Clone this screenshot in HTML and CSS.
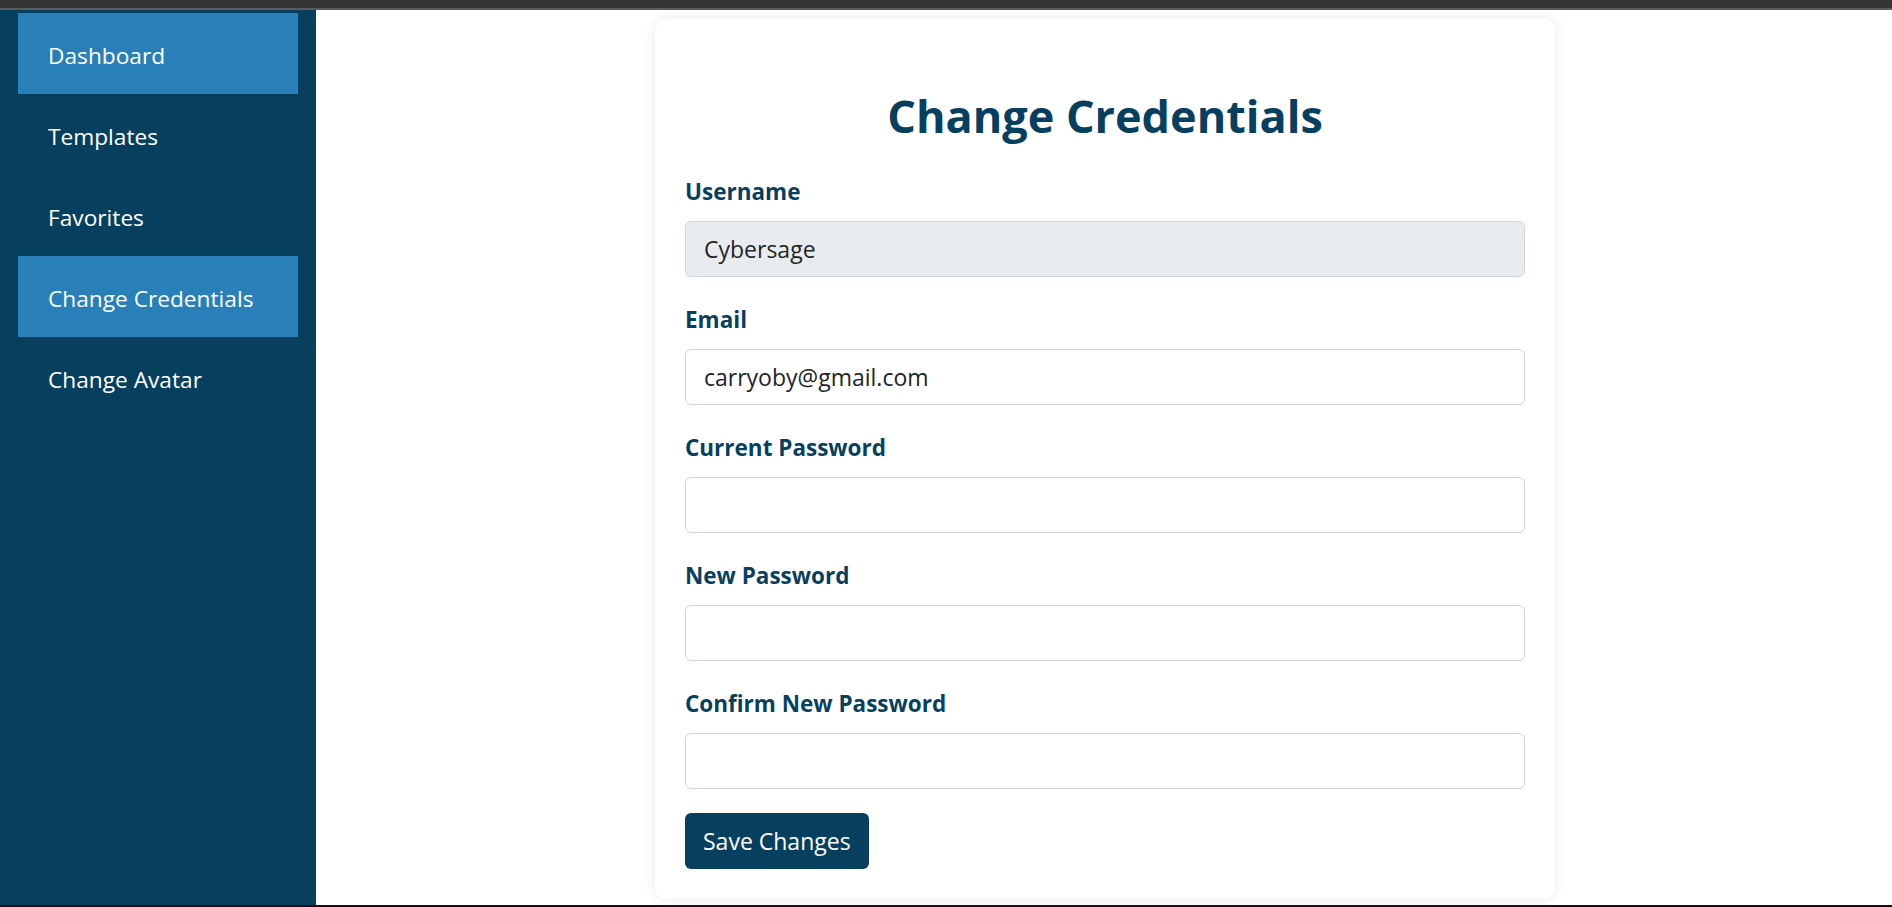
FILE: index.html
```html
<!DOCTYPE html>
<html lang="en">
<head>
<meta charset="utf-8">
<title>Change Credentials</title>
<link rel="stylesheet" href="styles.css">
</head>
<body>
<div class="chrome"></div>
<div class="app">
  <nav class="sidebar">
    <a class="nav-item active" href="#">Dashboard</a>
    <a class="nav-item" href="#">Templates</a>
    <a class="nav-item" href="#">Favorites</a>
    <a class="nav-item active" href="#">Change Credentials</a>
    <a class="nav-item" href="#">Change Avatar</a>
  </nav>
  <main class="main">
    <section class="card">
      <h2 class="title">Change Credentials</h2>
      <form class="form">
        <div class="group">
          <label class="label">Username</label>
          <input class="input input-disabled" type="text" value="Cybersage" disabled>
        </div>
        <div class="group">
          <label class="label">Email</label>
          <input class="input" type="email" value="carryoby@gmail.com">
        </div>
        <div class="group">
          <label class="label">Current Password</label>
          <input class="input" type="password">
        </div>
        <div class="group">
          <label class="label">New Password</label>
          <input class="input" type="password">
        </div>
        <div class="group">
          <label class="label">Confirm New Password</label>
          <input class="input" type="password">
        </div>
        <button class="btn" type="button">Save Changes</button>
      </form>
    </section>
  </main>
</div>
<div class="bottom-edge"></div>
</body>
</html>
```
FILE: styles.css
```css
* { box-sizing: border-box; }
html, body { margin: 0; padding: 0; height: 100%; }
body {
  font-family: "Open Sans", "Noto Sans", sans-serif;
  background: #ffffff;
  display: flex;
  flex-direction: column;
  overflow: hidden;
}
.chrome {
  height: 10px;
  flex: none;
  background: #353535;
  border-bottom: 2px solid #5c5c5c;
}
.app {
  flex: 1;
  display: flex;
  min-height: 0;
}
.sidebar {
  width: 316px;
  flex: none;
  background: #073f5f;
  padding: 3px 18px;
  display: flex;
  flex-direction: column;
}
.nav-item {
  height: 81px;
  display: flex;
  align-items: center;
  padding-left: 30px;
  padding-top: 3px;
  color: #ffffff;
  text-decoration: none;
  font-size: 22.7px;
}
.nav-item.active { background: #2980b9; }
.main {
  flex: 1;
  padding-top: 9px;
  padding-left: 2px;
}
.card {
  max-width: 900px;
  margin: 0 auto;
  background: #fff;
  border-radius: 12px;
  box-shadow: 0 0 14px rgba(0,0,0,0.09);
  padding: 30px;
}
.title {
  margin: 40px 0 30px;
  text-align: center;
  font-size: 45px;
  line-height: 1.2;
  font-weight: 700;
  color: #073f5f;
}
.form { display: flex; flex-direction: column; }
.group { display: flex; flex-direction: column; margin-bottom: 24px; }
.label {
  font-size: 22.5px;
  line-height: 38px;
  font-weight: 700;
  color: #073f5f;
  margin-bottom: 10px;
}
.input {
  height: 56px;
  border: 1px solid #ced4da;
  border-radius: 6px;
  padding: 0 18px;
  font-family: inherit;
  font-size: 23px;
  color: #212529;
  background: #fff;
}
.input-disabled { background: #e9ecef; color: #212529; -webkit-text-fill-color: #212529; opacity: 1; }
.btn {
  align-self: flex-start;
  height: 56px;
  padding: 0 18px;
  border: none;
  border-radius: 6px;
  background: #073f5f;
  color: #fff;
  font-family: inherit;
  font-size: 23px;
}
.bottom-edge { height: 2px; flex: none; background: #111; }
```
